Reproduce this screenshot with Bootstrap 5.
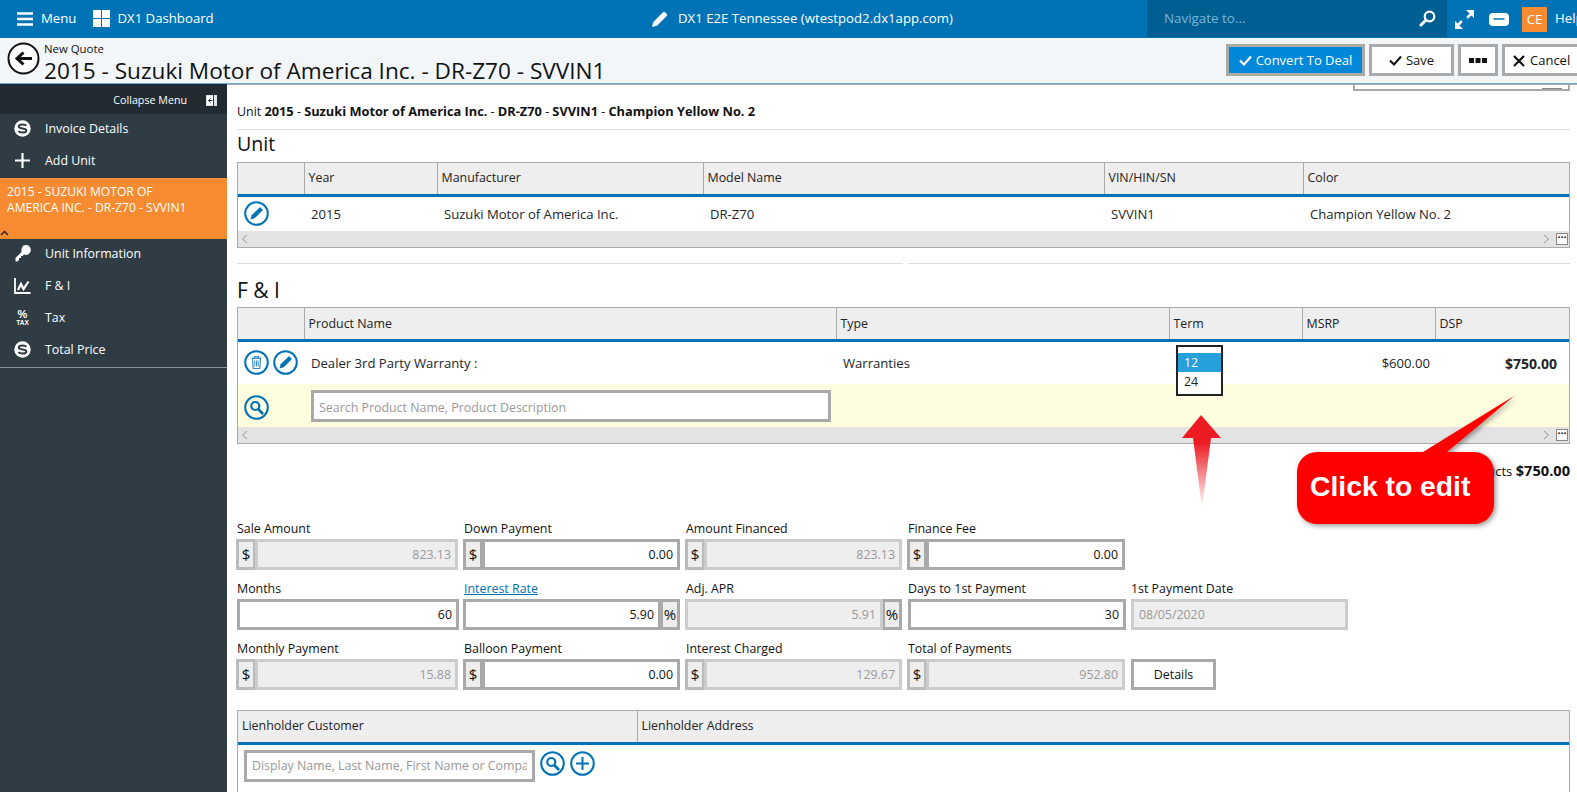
<!DOCTYPE html>
<html lang="en">
<head>
<meta charset="utf-8">
<title>New Quote</title>
<link href="https://cdn.jsdelivr.net/npm/bootstrap@5.3.0/dist/css/bootstrap.min.css" rel="stylesheet">
<style>
html,body{height:792px;overflow:hidden;}
body{font-family:"Open Sans","Noto Sans",sans-serif;font-size:12.4px;color:#111;background:#fff;position:relative;}
.topbar{height:38px;background:#0073b7;color:#fff;padding:0;flex-wrap:nowrap;font-size:13.2px;}
.topleft{width:604px;padding-left:17px;gap:7px;}
.topleft svg{flex:none;}
.dashicon{margin-left:2px;}
.topcenter{flex:1;gap:9px;padding-left:47px;}
.navsearch{width:300px;height:37px;background:#005f92;color:#78b6dc;padding:0 11px 0 17px;align-self:flex-start;font-size:13.4px;flex:none;}
.topright{width:130px;overflow:hidden;flex:none;padding-left:8px;}
.expandicon{flex:none;margin-right:15px;}
.chaticon{flex:none;margin-right:13px;}
.avatar{width:25px;height:25px;background:#f68b32;line-height:25px;text-align:center;flex:none;margin:0 8px 0 0;}
.subbar{height:46px;background:#f2f6f9;border-bottom:1px solid #6ea8d2;flex-wrap:nowrap;padding-left:7px;}
.backbtn{flex:none;margin-right:4px;margin-top:0;}
.newquote{font-size:11.4px;line-height:14px;padding-top:4px;}
.quotetitle{font-size:22.6px;line-height:25px;white-space:nowrap;margin:2px 0 0;font-weight:400;}
.actbtn{height:32px;border:3px solid #a9a9a9;border-radius:0;background:#fff;color:#111;font-size:13px;padding:1px 0 0;margin-left:4px;flex:none;display:flex;align-items:center;justify-content:center;gap:4px;}
.actbtn.primary{background:#0288d8;color:#fff;width:139px;margin-left:0;}
.actbtn.savebtn{width:85px;}
.actbtn.dots{width:40px;}
.actbtn.cancelbtn{width:100px;justify-content:flex-start;padding-left:8px;gap:5px;white-space:nowrap;}
.actions{margin-top:6px;margin-left:auto;flex:none;align-self:flex-start;width:351px;}
.shell{height:708px;}
.sidenav{width:227px;background:#2f3c44;color:#fff;flex:none;}
.collapserow{height:30px;background:#222b31;font-size:10.7px;padding:2px 10px 0 0;gap:19px;}
.sideitem{height:28px;margin-bottom:4px;padding-left:13px;gap:13px;}
.sideitem span{padding-top:3px;}
.sideitem svg{flex:none;width:19px;height:19px;}
.sideactive{height:61px;background:#f68b32;color:#fff;font-size:12.1px;line-height:16px;padding:6px 7px 0;position:relative;margin-bottom:0;}
.sidecaret{position:absolute;left:0;bottom:3px;}
.sideend{border-top:1px solid #8a9298;}
.mainpane{flex:1;min-width:0;border-top:1px solid #aaa;padding:0 7px 0 10px;overflow:hidden;}
.frag{height:6px;width:217px;margin-left:auto;border:2px solid #a9a9a9;border-top:0;position:relative;}
.fragbit{position:absolute;right:6px;bottom:0;width:20px;height:1px;background:#888;}
.unitline{line-height:18px;margin-top:11px;white-space:nowrap;}
.unitline strong{font-size:12.8px;}
.sep{height:1px;background:#ddd;margin:8px 0 0;border:0;opacity:1;}
.sechead{font-size:19.6px;line-height:26px;margin:1px 0 5px;font-weight:400;}
.sechead.sec-fi{font-size:21px;margin:13px 0 4px;}
.grid-wrap{border:1px solid #aaa;}
.dtable{table-layout:fixed;width:100%;margin:0;}
.dtable th{height:32px;background:#eee;font-weight:400;padding:0 4px;border-right:1px solid #aaa;border-bottom:3px solid #0073b7;box-shadow:none;vertical-align:middle;color:#222;}
.dtable th:last-child{border-right:0;}
.fitable th{padding-top:2px;}
.dtable td{padding:3px 7px 0;border:0;vertical-align:middle;box-shadow:none;font-size:13.1px;}
.dtable .iconcell{padding:0 0 0 6px;white-space:nowrap;}
.unitrow td{height:36px;}
.prodrow td{height:44px;}
.searchrow td{height:43px;background:#fefde0;padding-top:0;}
.dtable .searchrow .iconcell{padding-top:3px;}
.rounded-icon{width:25px;height:25px;vertical-align:middle;}
.iconcell .rounded-icon + .rounded-icon{margin-left:1px;}
.scrollstrip{height:16px;background:#e3e3e3;padding:0 1px 0 3px;}
.morebox{width:12px;height:12px;border:1px solid #888;background:#fff;margin-left:6px;line-height:6px;font-size:8px;text-align:center;}
.sep2row{gap:5px;margin-top:15px;}
.sep2row hr{flex:1;height:1px;background:#ddd;border:0;margin:0;opacity:1;}
.sep2row hr:first-child{flex:0 0 666px;}
.termcell{position:relative;}
.termlist{position:absolute;left:7px;top:3px;width:47px;height:51px;border:2px solid #222;background:#fff;padding-top:6px;z-index:3;font-size:12.4px;}
.termlist div{height:19px;line-height:19px;padding-left:6px;}
.termlist .sel{background:#26a0da;color:#fff;}
.dspcell{padding-right:12px!important;}
.msrpcell{padding-right:5px!important;}
.dspcell strong{font-size:14px;}
.flat-input{border:3px solid #a9a9a9;border-radius:0;height:32px;font-size:12.4px;padding:0 5px;box-shadow:none;color:#111;}
.flat-input::placeholder{color:#999;}
.search-prod{width:520px;padding-top:3px;}
.totalline{line-height:20px;margin-top:16px;height:61px;font-size:13.1px;}
.totalline strong{font-size:14.6px;}
.fgrid{display:grid;grid-template-columns:222px 217px 217px 218px 217px;column-gap:5px;row-gap:11px;}
.fcell label{display:block;height:18px;line-height:16px;margin:0;white-space:nowrap;}
.fcell a{color:#0073b7;}
.amountgroup{flex-wrap:nowrap;margin-left:-1px;height:31px;}
.amountgroup .form-control,.solo{border:3px solid #a9a9a9;border-radius:0!important;height:31px;font-size:12.4px;text-align:right;padding:0 4px 1px;color:#111;box-shadow:none;min-width:0;background:#fff;opacity:1;}
.solo{width:100%;}
.amountgroup .input-group-text{border:3px solid #a9a9a9;border-radius:0!important;background:#eee;padding:0;font-size:15px;height:31px;width:20px;justify-content:center;color:#111;margin-left:-3px;}
.amountgroup .input-group-text:first-child{margin-left:0;}
.amountgroup .form-control:not(:first-child){margin-left:-3px;}
.amountgroup .form-control[disabled],.solo[disabled]{border-color:#ccc;background:#eee;color:#999;-webkit-text-fill-color:#999;}
.amountgroup.offg .input-group-text{border-color:#bbb;}
.datebox{text-align:left;padding-left:5px;}
.detailsbtn{width:85px;height:31px;border:3px solid #a9a9a9;border-radius:0;background:#fff;font-size:12.4px;padding:1px 0 0;color:#111;}
.liengrid{margin-top:20px;border:1px solid #aaa;border-bottom:0;height:100px;}
.lienbody{padding:5px 0 0 6px;gap:5px;}
.lienbody .rounded-icon{margin-top:1px;}
.lieninput{width:291px;}
.annot{position:absolute;left:0;top:0;width:1577px;height:792px;pointer-events:none;z-index:5;}
</style>
</head>
<body>
<svg width="0" height="0" class="position-absolute">
<defs>
<symbol id="i-pencil" viewBox="0 0 25 25"><circle cx="12.5" cy="12.5" r="11.3" fill="none" stroke="#0073b7" stroke-width="2"/><path d="M6.5 18.5l1.2-4.2 7.6-7.6a1 1 0 0 1 1.4 0l1.6 1.6a1 1 0 0 1 0 1.4l-7.6 7.6z" fill="#0073b7"/></symbol>
<symbol id="i-trash" viewBox="0 0 25 25"><circle cx="12.5" cy="12.5" r="11.3" fill="none" stroke="#0073b7" stroke-width="2"/><path d="M7.5 8h10M10.5 8V6.5h4V8M8.5 8.5l.7 10h6.6l.7-10z" fill="none" stroke="#3f8fc6" stroke-width="1.2"/><path d="M10.8 10.5v6M12.5 10.5v6M14.2 10.5v6" stroke="#3f8fc6" stroke-width="1"/></symbol>
<symbol id="i-search" viewBox="0 0 25 25"><circle cx="12.5" cy="12.5" r="11.3" fill="none" stroke="#0073b7" stroke-width="2"/><circle cx="11.3" cy="11" r="4" fill="none" stroke="#0073b7" stroke-width="2.2"/><path d="M14.3 14.2l4 4" stroke="#0073b7" stroke-width="2.8" stroke-linecap="round"/></symbol>
<symbol id="i-plus" viewBox="0 0 25 25"><circle cx="12.5" cy="12.5" r="11.3" fill="none" stroke="#0073b7" stroke-width="2"/><path d="M12.5 6v13M6 12.5h13" stroke="#0073b7" stroke-width="2"/></symbol>
<symbol id="i-dollar" viewBox="0 0 19 19"><circle cx="9.5" cy="9.5" r="8.2" fill="#fff"/><path d="M13.4 6.8c-.6-1-2-1.4-3.9-1.4-2.2 0-3.7.8-3.7 2.1 0 3 7.6 1 7.6 4 0 1.3-1.6 2.1-3.9 2.1-1.9 0-3.4-.5-4-1.5" fill="none" stroke="#2f3c44" stroke-width="2"/></symbol>
</defs>
</svg>

<nav class="navbar topbar d-flex align-items-center">
  <div class="d-flex align-items-center topleft">
    <svg width="17" height="14" viewBox="0 0 17 14"><path d="M0 1.500h16M0 7h16M0 12.500h16" stroke="#fff" stroke-width="2.400"/></svg>
    <span class="me-2">Menu</span>
    <svg class="dashicon" width="17" height="17" viewBox="0 0 17 17"><path fill="#fff" d="M0 0h8v8H0zM9 0h8v8H9zM0 9h8v8H0zM9 9h8v8H9z"/></svg>
    <span class="dashlabel">DX1 Dashboard</span>
  </div>
  <div class="d-flex align-items-center topcenter">
    <svg width="18" height="18" viewBox="0 0 18 18"><path fill="#fff" d="M1 17l1.300-5L12 2.300a1.500 1.500 0 0 1 2 0l1.700 1.700a1.500 1.500 0 0 1 0 2L6 15.700z"/></svg>
    <span>DX1 E2E Tennessee (wtestpod2.dx1app.com)</span>
  </div>
  <div class="d-flex align-items-center justify-content-between navsearch">
    <span>Navigate to...</span>
    <svg width="17" height="17" viewBox="0 0 17 17"><circle cx="10.500" cy="6.500" r="4.800" fill="none" stroke="#fff" stroke-width="2.200"/><path d="M7 10l-5 5" stroke="#fff" stroke-width="3" stroke-linecap="round"/></svg>
  </div>
  <div class="d-flex align-items-center topright">
    <svg class="expandicon" width="19" height="19" viewBox="0 0 19 19"><path fill="#fff" d="M11 0h8v8l-2.600-2.600-3.400 3.400-1.800-1.800 3.400-3.400zM8 19H0v-8l2.600 2.600 3.400-3.400 1.800 1.800-3.400 3.400z"/></svg>
    <svg class="chaticon" width="20" height="13" viewBox="0 0 20 13"><path fill="#fff" d="M4 0h12a4 4 0 0 1 4 4v5a4 4 0 0 1-4 4H4a4 4 0 0 1-4-4V4a4 4 0 0 1 4-4z"/><path d="M4.500 6h11" stroke="#0073b7" stroke-width="1.500"/></svg>
    <span class="avatar">CE</span>
    <span>Help</span>
  </div>
</nav>

<header class="d-flex subbar">
  <svg class="backbtn mt-1" width="33" height="33" viewBox="0 0 33 33"><circle cx="16.500" cy="16.500" r="15" fill="#fff" stroke="#111" stroke-width="2"/><path d="M25 16.500H11M16.500 10.500l-6.500 6 6.500 6" fill="none" stroke="#111" stroke-width="3"/></svg>
  <div>
    <div class="newquote">New Quote</div>
    <h1 class="quotetitle">2015 - Suzuki Motor of America Inc. - DR-Z70 - SVVIN1</h1>
  </div>
  <div class="d-flex actions">
    <button class="btn actbtn primary"><svg width="13" height="11" viewBox="0 0 13 11"><path d="M1 5.500l4 4 7-8" fill="none" stroke="#fff" stroke-width="2.200"/></svg>Convert To Deal</button>
    <button class="btn actbtn savebtn"><svg width="13" height="11" viewBox="0 0 13 11"><path d="M1 5.500l4 4 7-8" fill="none" stroke="#111" stroke-width="2"/></svg>Save</button>
    <button class="btn actbtn dots" aria-label="More"><svg width="18" height="5" viewBox="0 0 18 5"><path fill="#111" d="M0 0h5v5H0zM6.500 0h5v5h-5zM13 0h5v5h-5z"/></svg></button>
    <button class="btn actbtn cancelbtn"><svg width="12" height="12" viewBox="0 0 12 12"><path d="M1 1l10 10M11 1L1 11" stroke="#111" stroke-width="2.200"/></svg>Cancel</button>
  </div>
</header>

<div class="d-flex shell">
  <aside class="sidenav">
    <div class="d-flex align-items-center justify-content-end collapserow">
      <span>Collapse Menu</span>
      <svg width="11" height="11" viewBox="0 0 11 11"><rect width="11" height="11" fill="#dfe4e8"/><rect x="1" y="1" width="6" height="9" fill="#fff"/><path d="M7.500 0v11" stroke="#2f3c44"/><path d="M2.500 5.500h4M4.500 3.500l-2 2 2 2" fill="none" stroke="#2f3c44"/></svg>
    </div>
    <div class="d-flex align-items-center sideitem"><svg><use href="#i-dollar"/></svg><span>Invoice Details</span></div>
    <div class="d-flex align-items-center sideitem"><svg viewBox="0 0 19 19"><path d="M9.500 2v15M2 9.500h15" stroke="#fff" stroke-width="2.200"/></svg><span>Add Unit</span></div>
    <div class="sideactive">2015 - SUZUKI MOTOR OF<br>AMERICA INC. - DR-Z70 - SVVIN1
      <svg class="sidecaret" width="9" height="6" viewBox="0 0 9 6"><path d="M1 5l3.500-3.500L8 5" fill="none" stroke="#222" stroke-width="1.400"/></svg>
    </div>
    <div class="d-flex align-items-center sideitem"><svg viewBox="0 0 19 19"><path fill="#fff" d="M12.500 1a5 5 0 0 1 3 9.200c-1.500.9-3.200.8-4.400.3L9.500 12H8v2H6v2l-1.500 1.500H2.500V14l6-6C8 5 9.500 1 12.500 1z"/></svg><span>Unit Information</span></div>
    <div class="d-flex align-items-center sideitem"><svg viewBox="0 0 19 19"><path d="M2 2v15h15.500" fill="none" stroke="#fff" stroke-width="1.800"/><path d="M5 14l3-6 2.500 5L15.500 5.500" fill="none" stroke="#fff" stroke-width="2.200"/></svg><span>F &amp; I</span></div>
    <div class="d-flex align-items-center sideitem"><svg viewBox="0 0 19 19"><text x="9.500" y="10" text-anchor="middle" font-family="Liberation Sans" font-weight="700" font-size="11" fill="#fff">%</text><text x="9.500" y="17" text-anchor="middle" font-family="Liberation Sans" font-weight="700" font-size="6.500" fill="#fff">TAX</text></svg><span>Tax</span></div>
    <div class="d-flex align-items-center sideitem"><svg><use href="#i-dollar"/></svg><span>Total Price</span></div>
    <div class="sideend"></div>
  </aside>

  <main class="mainpane">
    <div class="frag"><span class="fragbit"></span></div>
    <div class="unitline">Unit <strong>2015</strong> - <strong>Suzuki Motor of America Inc.</strong> - <strong>DR-Z70</strong> - <strong>SVVIN1</strong> - <strong>Champion Yellow No. 2</strong></div>
    <hr class="sep">
    <h2 class="sechead">Unit</h2>
    <div class="grid-wrap">
      <table class="table dtable">
        <colgroup><col style="width:66px"><col style="width:133px"><col style="width:266px"><col style="width:401px"><col style="width:199px"><col></colgroup>
        <thead><tr><th></th><th>Year</th><th>Manufacturer</th><th>Model Name</th><th>VIN/HIN/SN</th><th>Color</th></tr></thead>
        <tbody><tr class="unitrow"><td class="iconcell"><svg class="rounded-icon"><use href="#i-pencil"/></svg></td><td>2015</td><td>Suzuki Motor of America Inc.</td><td>DR-Z70</td><td>SVVIN1</td><td>Champion Yellow No. 2</td></tr></tbody>
      </table>
      <div class="d-flex align-items-center justify-content-between scrollstrip">
        <svg width="7" height="10" viewBox="0 0 7 10"><path d="M6 1L1.500 5 6 9" fill="none" stroke="#999"/></svg>
        <div class="d-flex align-items-center"><svg width="7" height="10" viewBox="0 0 7 10"><path d="M1 1l4.500 4L1 9" fill="none" stroke="#999"/></svg><span class="morebox">•••</span></div>
      </div>
    </div>
    <div class="d-flex sep2row"><hr><hr></div>
    <h2 class="sechead sec-fi">F &amp; I</h2>
    <div class="grid-wrap">
      <table class="table dtable fitable">
        <colgroup><col style="width:66px"><col style="width:532px"><col style="width:333px"><col style="width:133px"><col style="width:133px"><col></colgroup>
        <thead><tr><th></th><th>Product Name</th><th>Type</th><th>Term</th><th>MSRP</th><th>DSP</th></tr></thead>
        <tbody>
          <tr class="prodrow"><td class="iconcell"><svg class="rounded-icon"><use href="#i-trash"/></svg> <svg class="rounded-icon"><use href="#i-pencil"/></svg></td><td>Dealer 3rd Party Warranty :</td><td>Warranties</td><td class="termcell"><div class="termlist"><div class="sel">12</div><div>24</div></div></td><td class="text-end msrpcell">$600.00</td><td class="text-end dspcell"><strong>$750.00</strong></td></tr>
          <tr class="searchrow"><td class="iconcell"><svg class="rounded-icon"><use href="#i-search"/></svg></td><td colspan="2"><input class="form-control flat-input search-prod" placeholder="Search Product Name, Product Description"></td><td></td><td></td><td></td></tr>
        </tbody>
      </table>
      <div class="d-flex align-items-center justify-content-between scrollstrip">
        <svg width="7" height="10" viewBox="0 0 7 10"><path d="M6 1L1.500 5 6 9" fill="none" stroke="#999"/></svg>
        <div class="d-flex align-items-center"><svg width="7" height="10" viewBox="0 0 7 10"><path d="M1 1l4.500 4L1 9" fill="none" stroke="#999"/></svg><span class="morebox">•••</span></div>
      </div>
    </div>
    <div class="text-end totalline">Total Products <strong>$750.00</strong></div>

    <form class="fgrid">
      <div class="fcell"><label>Sale Amount</label><div class="input-group amountgroup offg"><span class="input-group-text">$</span><input class="form-control" value="823.13" disabled></div></div>
      <div class="fcell"><label>Down Payment</label><div class="input-group amountgroup"><span class="input-group-text">$</span><input class="form-control" value="0.00"></div></div>
      <div class="fcell"><label>Amount Financed</label><div class="input-group amountgroup offg"><span class="input-group-text">$</span><input class="form-control" value="823.13" disabled></div></div>
      <div class="fcell"><label>Finance Fee</label><div class="input-group amountgroup"><span class="input-group-text">$</span><input class="form-control" value="0.00"></div></div>
      <div class="fcell"></div>

      <div class="fcell"><label>Months</label><input class="form-control solo" value="60"></div>
      <div class="fcell"><label><a href="#">Interest Rate</a></label><div class="input-group amountgroup"><input class="form-control" value="5.90"><span class="input-group-text">%</span></div></div>
      <div class="fcell"><label>Adj. APR</label><div class="input-group amountgroup"><input class="form-control" value="5.91" disabled><span class="input-group-text">%</span></div></div>
      <div class="fcell"><label>Days to 1st Payment</label><input class="form-control solo" value="30"></div>
      <div class="fcell"><label>1st Payment Date</label><input class="form-control solo datebox" value="08/05/2020" disabled></div>

      <div class="fcell"><label>Monthly Payment</label><div class="input-group amountgroup offg"><span class="input-group-text">$</span><input class="form-control" value="15.88" disabled></div></div>
      <div class="fcell"><label>Balloon Payment</label><div class="input-group amountgroup"><span class="input-group-text">$</span><input class="form-control" value="0.00"></div></div>
      <div class="fcell"><label>Interest Charged</label><div class="input-group amountgroup offg"><span class="input-group-text">$</span><input class="form-control" value="129.67" disabled></div></div>
      <div class="fcell"><label>Total of Payments</label><div class="input-group amountgroup offg"><span class="input-group-text">$</span><input class="form-control" value="952.80" disabled></div></div>
      <div class="fcell d-flex align-items-end"><button type="button" class="btn detailsbtn">Details</button></div>
    </form>

    <div class="liengrid">
      <table class="table dtable">
        <colgroup><col style="width:399px"><col></colgroup>
        <thead><tr><th>Lienholder Customer</th><th>Lienholder Address</th></tr></thead>
      </table>
      <div class="d-flex align-items-start lienbody">
        <input class="form-control flat-input lieninput" placeholder="Display Name, Last Name, First Name or Company">
        <svg class="rounded-icon"><use href="#i-search"/></svg>
        <svg class="rounded-icon"><use href="#i-plus"/></svg>
      </div>
    </div>
  </main>
</div>

<svg class="annot" viewBox="0 0 1577 792">
  <defs>
    <linearGradient id="arrowfade" x1="0" y1="0" x2="0" y2="1"><stop offset="0" stop-color="#ed1c24"/><stop offset=".3" stop-color="#ed1c24"/><stop offset="1" stop-color="#ed1c24" stop-opacity="0"/></linearGradient>
    <filter id="soft" x="-20%" y="-20%" width="140%" height="140%"><feDropShadow dx="2" dy="2" stdDeviation="2.500" flood-color="#000" flood-opacity=".4"/></filter>
  </defs>
  <path d="M1201 415l20 23h-10l-9 70-9-70h-11z" fill="url(#arrowfade)"/>
  <path filter="url(#soft)" fill="#f00" d="M1317 452h106l91-56-67 56h27a20 20 0 0 1 20 20v32a20 20 0 0 1-20 20h-157a20 20 0 0 1-20-20v-32a20 20 0 0 1 20-20z"/>
  <text x="1310" y="496" font-family="Liberation Sans" font-weight="700" font-size="28.300" fill="#fff">Click to edit</text>
</svg>
</body>
</html>
